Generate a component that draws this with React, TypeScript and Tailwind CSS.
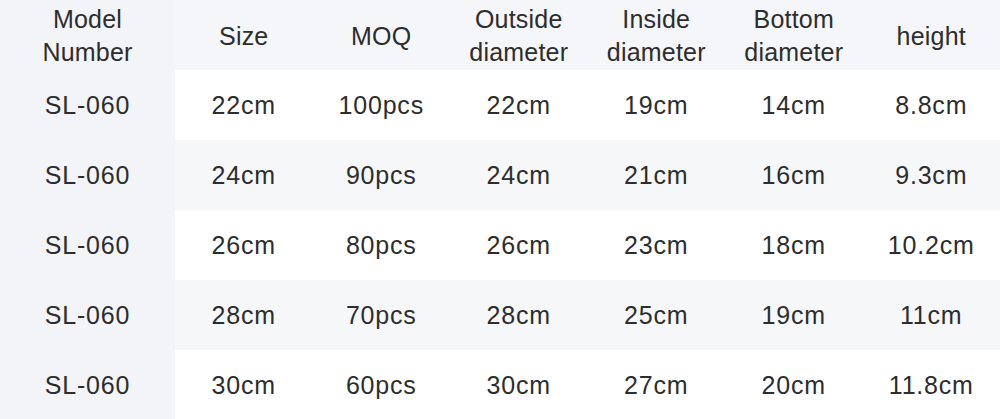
import React from 'react';

const headers = [
  ['Model', 'Number'],
  ['Size'],
  ['MOQ'],
  ['Outside', 'diameter'],
  ['Inside', 'diameter'],
  ['Bottom', 'diameter'],
  ['height'],
];

const rows = [
  ['SL-060', '22cm', '100pcs', '22cm', '19cm', '14cm', '8.8cm'],
  ['SL-060', '24cm', '90pcs', '24cm', '21cm', '16cm', '9.3cm'],
  ['SL-060', '26cm', '80pcs', '26cm', '23cm', '18cm', '10.2cm'],
  ['SL-060', '28cm', '70pcs', '28cm', '25cm', '19cm', '11cm'],
  ['SL-060', '30cm', '60pcs', '30cm', '27cm', '20cm', '11.8cm'],
];

const App = () => {
  return (
    <div className="w-[1000px] h-[419px] bg-white text-[#2d2d2d] font-['Liberation_Sans',Arial,sans-serif]">
      <div className="grid grid-cols-[175px_repeat(6,1fr)] h-[70px] bg-[#f5f6f9]">
        {headers.map((h, i) => (
          <div
            key={i}
            className={`flex flex-col items-center justify-center pt-[2px] text-[25px] leading-[33px] tracking-[0.2px] ${i === 0 ? 'bg-[#f3f4f8]' : ''}`}
          >
            {h.map((line) => (
              <span key={line}>{line}</span>
            ))}
          </div>
        ))}
      </div>
      {rows.map((row, r) => (
        <div
          key={r}
          className={`grid grid-cols-[175px_repeat(6,1fr)] ${r === 4 ? 'h-[69px]' : 'h-[70px]'} ${r % 2 === 1 ? 'bg-[#f6f7f9]' : 'bg-white'}`}
        >
          {row.map((cell, c) => (
            <div
              key={c}
              className={`flex items-center justify-center pt-[2px] text-[25px] tracking-[0.8px] ${c === 0 ? 'bg-[#f3f4f8]' : ''}`}
            >
              {cell}
            </div>
          ))}
        </div>
      ))}
    </div>
  );
};

export default App;
